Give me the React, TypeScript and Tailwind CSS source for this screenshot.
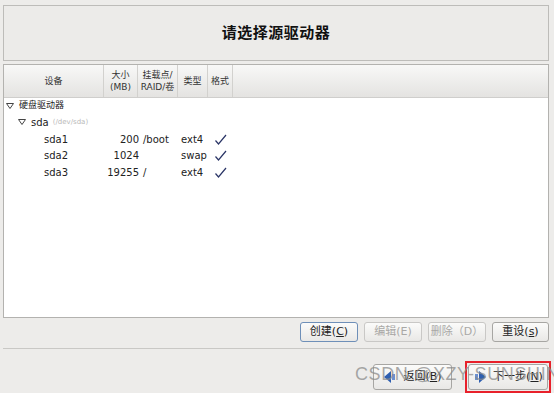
const font = "font-['DejaVu_Sans','Noto_Sans_CJK_SC',sans-serif]";

type Row = { name: string; size?: string; mount?: string; type?: string; fmt?: boolean; depth: number; hint?: string; toggle?: boolean };

const rows: Row[] = [
  { name: "硬盘驱动器", depth: 0, toggle: true },
  { name: "sda", depth: 1, toggle: true, hint: "(/dev/sda)" },
  { name: "sda1", size: "200", mount: "/boot", type: "ext4", fmt: true, depth: 2 },
  { name: "sda2", size: "1024", mount: "", type: "swap", fmt: true, depth: 2 },
  { name: "sda3", size: "19255", mount: "/", type: "ext4", fmt: true, depth: 2 },
];

function Tri() {
  return (
    <svg width="8" height="6" viewBox="0 0 8 6" className="mr-[5px]">
      <path d="M0.5 0.5 L7.5 0.5 L4 5.5 Z" fill="none" stroke="#444" strokeWidth="1" />
    </svg>
  );
}

function Check() {
  return (
    <svg width="13" height="11" viewBox="0 0 13 11">
      <path d="M1.5 6.5 L4.5 10 L12 1" fill="none" stroke="#2a3566" strokeWidth="1.2" />
    </svg>
  );
}

function Arrow({ dir }: { dir: "left" | "right" }) {
  return (
    <svg width="14" height="14" viewBox="0 0 14 14">
      {dir === "left" ? (
        <path d="M1 7 L8 1 L8 13 Z" fill="#2f5fb0" />
      ) : (
        <path d="M13 7 L6 1 L6 13 Z" fill="#2f5fb0" />
      )}
      <rect x={dir === "left" ? 9 : 2} y="4" width="3" height="6" fill="#6b8fcf" />
    </svg>
  );
}

function Btn({ label, disabled, focus, w }: { label: React.ReactNode; disabled?: boolean; focus?: boolean; w: string }) {
  return (
    <div
      className={`${w} h-[20px] flex items-center justify-center rounded-[3px] border text-[11px] bg-gradient-to-b from-[#fbfbfa] to-[#e9e8e6] ${
        focus ? "border-[#6e8fb8]" : disabled ? "border-[#c9c8c6]" : "border-[#a7a6a3]"
      } ${disabled ? "text-[#a9a8a6]" : "text-[#222]"}`}
    >
      {label}
    </div>
  );
}

export default function App() {
  return (
    <div className={`w-[554px] h-[393px] bg-[#edecea] overflow-hidden relative ${font}`}>
      <div className="pt-[5px] px-[3px] pr-[5px]">
        <div className="h-[56px] border border-[#bdbcb9] bg-[#ecebe9] flex items-center justify-center">
          <span className="text-[15px] font-bold text-[#111] tracking-[0.5px]">请选择源驱动器</span>
        </div>

        <div className="mt-[3px] h-[254px] border border-[#b3b2af] bg-white flex flex-col">
          <div className="h-[33px] flex text-[9px] text-[#333] leading-[12px] bg-gradient-to-b from-[#f8f8f7] to-[#e4e3e1] border-b border-[#cfcecc]">
            <div className="w-[100px] flex items-center justify-center border-r border-[#d2d1ce]">设备</div>
            <div className="w-[34px] flex flex-col items-center justify-center border-r border-[#d2d1ce]">
              <span>大小</span>
              <span>(MB)</span>
            </div>
            <div className="w-[40px] flex flex-col items-center justify-center border-r border-[#d2d1ce]">
              <span>挂载点/</span>
              <span>RAID/卷</span>
            </div>
            <div className="w-[30px] flex items-center justify-center border-r border-[#d2d1ce]">类型</div>
            <div className="w-[25px] flex items-center justify-center border-r border-[#d2d1ce]">格式</div>
            <div className="flex-1" />
          </div>

          <div className="text-[10px] text-[#222]">
            {rows.map((r, i) => (
              <div key={r.name} className={`${i === 0 ? "h-[15px]" : i === 1 ? "h-[18px]" : "h-[16.5px]"} flex items-center`}>
                <div
                  className={`w-[100px] flex items-center ${r.depth === 0 ? "pl-[2px] text-[9px]" : r.depth === 1 ? "pl-[14px]" : "pl-[40px]"}`}
                >
                  {r.toggle && <Tri />}
                  <span>{r.name}</span>
                  {r.hint && <span className="ml-[4px] text-[7px] text-[#b9b9b9]">{r.hint}</span>}
                </div>
                <div className="w-[35px] text-right">{r.size}</div>
                <div className="w-[41px] pl-[4px]">{r.mount}</div>
                <div className="w-[34px] pl-[1px]">{r.type}</div>
                <div className="w-[20px] flex">{r.fmt && <Check />}</div>
              </div>
            ))}
          </div>
        </div>

        <div className="mt-[4px] flex justify-end gap-[6px]">
          <Btn w="w-[58px]" focus label={<span>创建(<u>C</u>)</span>} />
          <Btn w="w-[58px]" disabled label="编辑(E)" />
          <Btn w="w-[58px]" disabled label="删除（D）" />
          <Btn w="w-[57px]" label={<span>重设(<u>s</u>)</span>} />
        </div>

        <div className="mt-[6px] border-t border-[#c9c8c5]" />

        <div className="mt-[15px] flex justify-end gap-[16px] pr-[1px]">
          <div className="w-[79px] h-[26px] flex items-center justify-center gap-[6px] rounded-[3px] border border-[#a7a6a3] bg-gradient-to-b from-[#fbfbfa] to-[#e9e8e6] text-[11px] text-[#222]">
            <Arrow dir="left" />
            <span>返回(<u>B</u>)</span>
          </div>
          <div className="relative">
            <div className="w-[80px] h-[26px] flex items-center justify-center gap-[6px] rounded-[3px] border border-[#a7a6a3] bg-gradient-to-b from-[#fbfbfa] to-[#e9e8e6] text-[11px] text-[#222]">
              <Arrow dir="right" />
              <span>下一步(<u>N</u>)</span>
            </div>
            <div className="absolute -left-[3px] -top-[3px] w-[86px] h-[32px] border-2 border-[#e8212b]" />
          </div>
        </div>
      </div>

      <div className="absolute left-[355px] top-[364px] whitespace-nowrap text-[18px] leading-[20px] text-[#8c8c8c]/75 font-['Liberation_Sans',sans-serif] tracking-[0.6px] pointer-events-none">
        CSDN @XZY-SUNSHINE
      </div>
    </div>
  );
}
